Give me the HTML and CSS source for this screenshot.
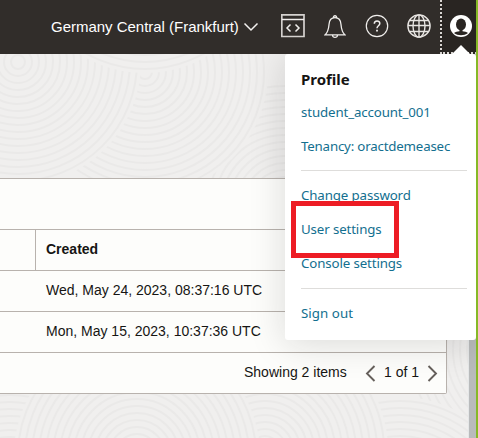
FILE: index.html
```
<!DOCTYPE html>
<html lang="en">
<head>
<meta charset="utf-8">
<title>Console</title>
<link rel="stylesheet" href="styles.css">
</head>
<body>
<div class="app">
  <header class="topbar">
    <div class="region"><span class="region-name">Germany Central (Frankfurt)</span>
      <svg width="16" height="10" viewBox="0 0 16 10"><path d="M1.500 1.500 8 8l6.500-6.500" fill="none" stroke="#f4f2f0" stroke-width="1.500"/></svg>
    </div>
    <svg class="dev" width="24" height="24" viewBox="0 0 24 24" fill="none" stroke="#d5d2cf" stroke-width="1.500"><path d="M.8.800h22.200v21.700H.8z" stroke-width="1.700"/><path d="M1 5.500h22" stroke="#f0eeec"/><path d="M9.500 10.500 6 14l3.500 3.500M14.500 10.500 18 14l-3.500 3.500" stroke="#f0eeec"/></svg>
    <svg class="bell" width="22" height="24" viewBox="0 0 22 24" fill="none" stroke="#f0eeec" stroke-width="1.300"><path d="M1.200 19.800C4.500 16.500 4.600 14 5 9.500 5.300 5 7.500 2.700 11 2.700s5.700 2.300 6 6.800c.4 4.500.5 7 3.800 10.300zM8.500 20.300c.3 2.800 4.700 2.800 5 0M9.500 2.700c-.5-2.600 3.500-2.600 3 0"/></svg>
    <svg class="help" width="24" height="24" viewBox="0 0 24 24" fill="none" stroke="#f0eeec" stroke-width="1.200"><circle cx="12" cy="12" r="10.700"/><path d="M9.300 9.700c0-3.700 5.600-3.600 5.500-.2 0 2.300-2.800 2.300-2.800 4.700" stroke-width="1.500"/><path d="M12 15.700v1.900" stroke-width="1.800"/></svg>
    <svg class="globe" width="24" height="24" viewBox="0 0 24 24" fill="none" stroke="#e8e5e2" stroke-width="1.400"><circle cx="12" cy="12" r="11.100"/><ellipse cx="12" cy="12" rx="6" ry="11.100"/><path d="M12 1v22M1 11.500h22M3 6.500h18M3 17.500h18"/></svg>
    <div class="account">
      <svg width="22" height="22" viewBox="0 0 22 22"><circle cx="11" cy="11" r="11" fill="#fff"/><ellipse cx="11" cy="9.500" rx="5" ry="6" fill="#292522"/><path d="M9.500 14h3v2.200c2 .4 4 .5 5.500 1.700-3.800 3-10.200 3-14 0 1.500-1.200 3.500-1.300 5.500-1.700z" fill="#292522"/></svg>
      <span class="pointer"></span>
    </div>
  </header>
  <main class="content">
    <svg class="texture" width="478" height="384" viewBox="0 54 478 384">
      <defs>
        <g id="rings" fill="none" stroke="#eae9e8" stroke-width="2">
          <circle r="7"/><circle r="14"/><circle r="21"/><circle r="28"/><circle r="35"/><circle r="42"/><circle r="49"/><circle r="56"/><circle r="63"/><circle r="70"/><circle r="77"/><circle r="84"/><circle r="91"/><circle r="98"/><circle r="105"/><circle r="112"/><circle r="119"/>
        </g>
        <g id="disc"><circle r="123" fill="#f0efee"/><use href="#rings"/></g>
      </defs>
      <use href="#disc" x="285" y="205"/><use href="#disc" x="145" y="72"/><use href="#disc" x="18" y="62"/><use href="#disc" x="145" y="-50"/>
      <use href="#disc" x="10" y="500"/><use href="#disc" x="530" y="350"/><use href="#disc" x="400" y="520"/><use href="#disc" x="265" y="450"/><use href="#disc" x="137" y="455"/>
    </svg>
    <section class="card">
      <div class="toolbar"></div>
      <div class="row head"><div class="lead"></div><div class="cell">Created</div></div>
      <div class="row"><div class="lead"></div><div class="cell">Wed, May 24, 2023, 08:37:16 UTC</div></div>
      <div class="row"><div class="lead"></div><div class="cell">Mon, May 15, 2023, 10:37:36 UTC</div></div>
      <div class="row pager"><span class="count">Showing 2 items</span>
        <svg width="11" height="17" viewBox="0 0 11 17"><path d="M9.500 1 2 8.500 9.500 16" fill="none" stroke="#66605c" stroke-width="1.900"/></svg>
        <span class="pages">1 of 1</span>
        <svg width="11" height="17" viewBox="0 0 11 17"><path d="M1.500 1 9 8.500 1.500 16" fill="none" stroke="#66605c" stroke-width="1.900"/></svg>
      </div>
    </section>
    <div class="scrollbar"></div>
  </main>
  <aside class="menu">
    <h2>Profile</h2>
    <a class="user">student_account_001</a>
    <a class="tenancy">Tenancy: oractdemeasec</a>
    <hr>
    <a>Change password</a>
    <a>User settings</a>
    <a>Console settings</a>
    <hr class="last">
    <a class="signout">Sign out</a>
  </aside>
  <div class="highlight"></div>
  <div class="edge"></div>
</div>
</body>
</html>
```
FILE: styles.css
```
* { box-sizing: border-box; }
body { margin: 0; font: 14px/20px "Liberation Sans", Arial, sans-serif; color: #161513; }
svg { display: block; flex: none; }
.app { position: relative; width: 478px; height: 438px; overflow: hidden; background: #f0efee; }
.topbar { display: flex; height: 54px; background: #312d2a; padding-left: 51px; color: #fff; }
.region { display: flex; width: 230px; height: 54px; align-items: center; gap: 4px; }
.region-name { width: 188px; white-space: nowrap; font-size: 15px; letter-spacing: -.02px; }
.dev { margin-top: 14px; }
.bell { margin: 15px 0 0 19px; }
.help { margin: 14px 0 0 19px; }
.globe { margin: 14px 0 0 18px; }
.account { position: relative; width: 37px; margin-left: 9px; border-left: 2px dotted #d9d6d3; border-bottom: 2px dotted #d9d6d3; background: #292522; padding: 15px 0 0 8px; }
.pointer { position: absolute; left: 10px; bottom: -2px; border: 9px solid transparent; border-top: 0; border-bottom: 9px solid #fff; }
.content { position: relative; display: flex; height: 384px; }
.texture { position: absolute; inset: 0; }
.card { position: relative; width: 447px; height: 216px; margin-top: 124px; background: #fdfdfb; border: solid #b8b2ad; border-width: 1px 1px 1px 0; border-radius: 0 2px 2px 0; }
.toolbar { height: 50px; }
.row { display: flex; height: 41px; border-top: 1px solid #b8b2ad; line-height: 39px; }
.lead { width: 36px; }
.head .lead { border-right: 1px solid #b8b2ad; }
.cell { padding-left: 10px; white-space: nowrap; }
.head .cell { font-weight: bold; }
.pager { padding-left: 244px; align-items: center; }
.count { width: 121px; margin-top: -2px; }
.pages { width: 33px; margin: -2px 10px 0 8px; white-space: nowrap; }
.scrollbar { position: relative; width: 8px; margin-left: 21px; background: #b9bbbc; border-left: 1px solid #e5e7e8; }
.menu { position: absolute; left: 285px; top: 54px; width: 191px; height: 286px; padding: 8px 9px 0 16px; background: #fff; border-radius: 3px; box-shadow: 0 4px 36px rgba(22, 21, 19, .15); clip-path: inset(0 0 -60px -60px round 3px 0 0 0); font-family: "Noto Sans", sans-serif; }
.menu h2 { margin: 0; font-size: 15px; line-height: 34px; height: 33px; }
.menu a { display: block; height: 34px; line-height: 34px; font-size: 13.300px; letter-spacing: -.13px; color: #136f8f; white-space: nowrap; }
.menu .tenancy { letter-spacing: -.19px; }
.menu .signout { letter-spacing: .05px; }
.menu hr { margin: 7px 0 7px; border: 0; height: 1px; background: #dedddb; }
.menu .last { margin: 8px 0 7px; }
.highlight { position: absolute; left: 291px; top: 201px; width: 108px; height: 57px; border: 5px solid #ed1c24; }
.edge { position: absolute; right: 0; top: 0; width: 2px; height: 438px; background: #86b926; }
```
